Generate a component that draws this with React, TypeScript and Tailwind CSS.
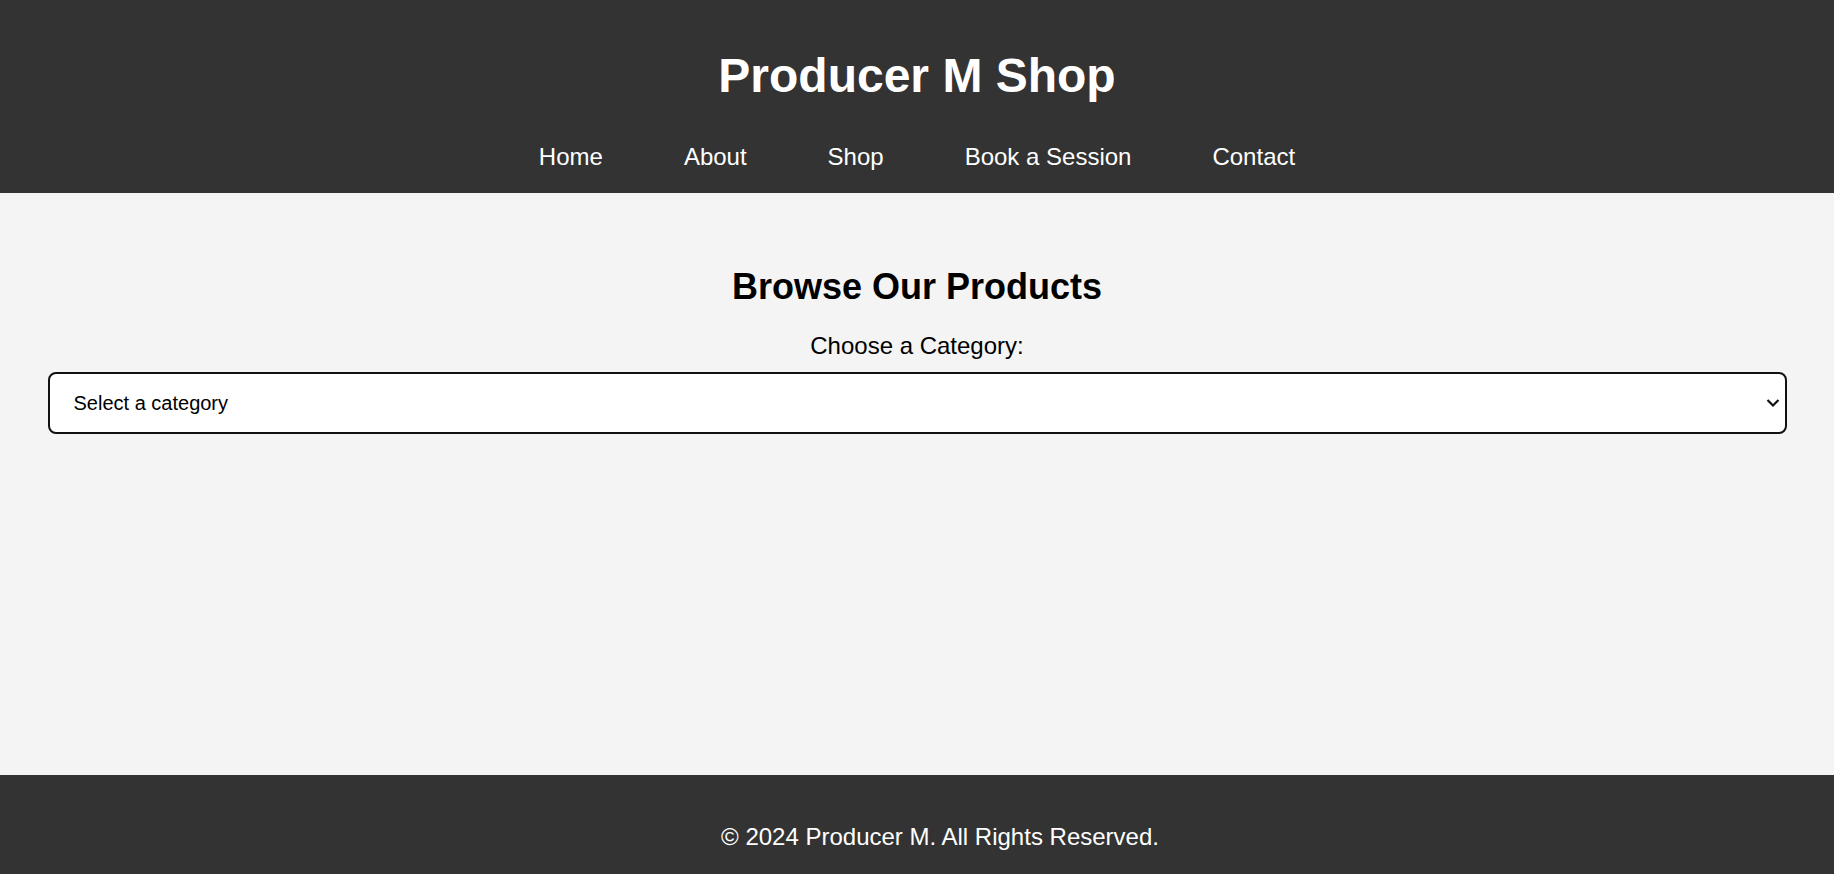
import React from "react";

export default function App() {
  const font = { fontFamily: '"Liberation Sans", Arial, sans-serif' };
  return (
    <div className="min-h-[876px] w-[1836px] bg-white" style={font}>
      <div className="flex h-[874px] w-[1834px] flex-col bg-[#f4f4f4]">
        <header className="flex h-[193px] flex-col items-center bg-[#333333] pt-[48px] text-white">
          <h1 className="text-[48px] font-bold leading-[55px]">Producer M Shop</h1>
          <nav className="mt-[40px] flex gap-[81px] text-[24px] leading-[28px]">
            <a href="#">Home</a>
            <a href="#">About</a>
            <a href="#">Shop</a>
            <a href="#">Book a Session</a>
            <a href="#">Contact</a>
          </nav>
        </header>
        <main className="flex flex-1 flex-col items-center pt-[73px] text-black">
          <h2 className="text-[36px] font-bold leading-[41px]">Browse Our Products</h2>
          <label htmlFor="cat" className="mt-[25px] text-[24px] leading-[28px]">
            Choose a Category:
          </label>
          <div className="relative mt-[12px] h-[62px] w-[1739px]">
            <select
              id="cat"
              className="h-full w-full appearance-none rounded-[8px] border-2 border-[#111111] bg-white pl-[24px] text-[20px] text-black outline-none"
              style={font}
              defaultValue=""
            >
              <option value="">Select a category</option>
              <option value="beats">Beats</option>
              <option value="kits">Sound Kits</option>
            </select>
            <svg
              className="pointer-events-none absolute right-[7px] top-[26px]"
              width="14"
              height="10"
              viewBox="0 0 14 10"
            >
              <polyline points="1.5,2 7,7.5 12.5,2" fill="none" stroke="#111" strokeWidth="2.2" />
            </svg>
          </div>
        </main>
        <footer className="h-[99px] bg-[#333333] pl-[46px] pt-[48px] text-center text-[24px] leading-[28px] text-white">
          © 2024 Producer M. All Rights Reserved.
        </footer>
      </div>
    </div>
  );
}
